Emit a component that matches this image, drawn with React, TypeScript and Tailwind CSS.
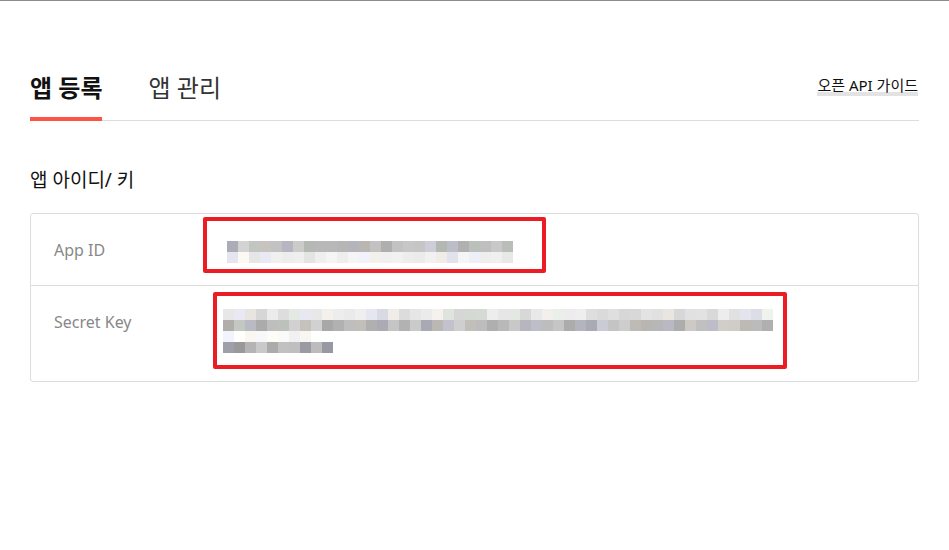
import React from "react";

// deterministic noise so the blurred values look the same on every render
function makeRand(seed: number) {
  let s = seed >>> 0;
  return () => {
    s = (s + 0x6d2b79f5) >>> 0;
    let t = s;
    t = Math.imul(t ^ (t >>> 15), t | 1);
    t ^= t + Math.imul(t ^ (t >>> 7), t | 61);
    return ((t ^ (t >>> 14)) >>> 0) / 4294967296;
  };
}

type Row = { cols: number; min: number; max: number };

function Mosaic({ seed, rows, cell = 11 }: { seed: number; rows: Row[]; cell?: number }) {
  const rand = makeRand(seed);
  const width = Math.max(...rows.map((r) => r.cols)) * cell;
  const rects: React.ReactNode[] = [];
  rows.forEach((row, y) => {
    for (let x = 0; x < row.cols; x++) {
      const g = row.min + rand() * (row.max - row.min);
      const tint = rand();
      let r = g, gg = g, b = g;
      if (tint < 0.2) b += 10;
      else if (tint < 0.35) { r += 8; gg += 4; }
      else if (tint < 0.45) gg += 5;
      const c = `rgb(${Math.min(255, Math.round(r))},${Math.min(255, Math.round(gg))},${Math.min(255, Math.round(b))})`;
      rects.push(<rect key={`${y}-${x}`} x={x * cell} y={y * cell} width={cell} height={cell} fill={c} />);
    }
  });
  return (
    <svg width={width} height={rows.length * cell} className="block" shapeRendering="crispEdges">
      {rects}
    </svg>
  );
}

export default function App() {
  return (
    <div
      className="relative w-[949px] h-[550px] bg-white overflow-hidden"
      style={{ fontFamily: '"Noto Sans", "Noto Sans CJK KR", sans-serif' }}
    >
      {/* strip of the page above */}
      <div className="h-px bg-[#8f8c88]" />

      <div className="px-[30px] h-[543px] border-b border-[#ececec]">
        {/* tabs */}
        <div className="mt-[71px] flex items-end justify-between border-b border-[#dddddd]">
          <div className="flex items-end gap-[46px]">
            <button className="-mb-px pb-[13px] border-b-4 border-[#fd5545] text-[24px] leading-[32px] font-bold text-[#111]">
              앱 등록
            </button>
            <button className="-mb-px pb-[13px] border-b-4 border-transparent text-[24px] leading-[32px] text-[#333]">
              앱 관리
            </button>
          </div>
          <a className="mb-[24px] mr-[1px] text-[15px] leading-[14px] text-[#111] border-b-[4px] border-[#e3e3e3]">
            오픈 API 가이드
          </a>
        </div>

        <h2 className="mt-[46px] text-[19px] leading-[26px] text-[#111]">앱 아이디/ 키</h2>

        {/* app id / key table */}
        <div className="mt-[20px] border border-[#dddddd] rounded-[3px]">
          <div className="flex items-center h-[72px] border-b border-[#dddddd]">
            <div className="w-[196px] pl-[23px] text-[16px] text-[#888]">App ID</div>
            <div className="pt-[4px]">
              <Mosaic
                seed={7}
                rows={[
                  { cols: 26, min: 172, max: 212 },
                  { cols: 26, min: 226, max: 246 },
                ]}
              />
            </div>
          </div>
          <div className="flex items-center h-[95px]">
            <div className="w-[192px] pl-[23px] text-[16px] text-[#888] -mt-[24px]">Secret Key</div>
            <div className="-mt-[6px]">
              <Mosaic
                seed={31}
                rows={[
                  { cols: 50, min: 212, max: 240 },
                  { cols: 50, min: 168, max: 212 },
                  { cols: 9, min: 238, max: 252 },
                  { cols: 10, min: 152, max: 204 },
                ]}
              />
            </div>
          </div>
        </div>
      </div>

      {/* red annotation boxes laid over the blurred values */}
      <div className="absolute left-[203px] top-[217px] w-[343px] h-[56px] border-[4px] border-[#ec1c24] rounded-[2px]" />
      <div className="absolute left-[213px] top-[292px] w-[574px] h-[77px] border-[4px] border-[#ec1c24] rounded-[2px]" />
    </div>
  );
}
